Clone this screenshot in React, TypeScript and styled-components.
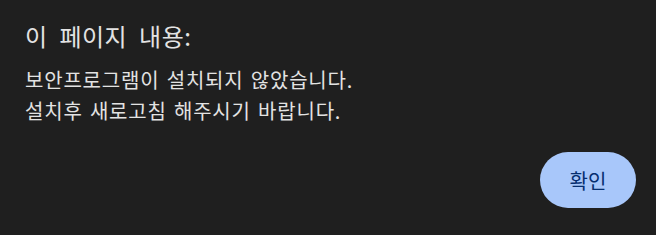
import styled, { createGlobalStyle } from 'styled-components'

const GlobalStyle = createGlobalStyle`
  html, body {
    margin: 0;
    padding: 0;
    background: #1f1f1f;
  }
`

const Dialog = styled.div`
  width: 656px;
  height: 235px;
  box-sizing: border-box;
  background: #1f1f1f;
  color: #e3e3e3;
  font-family: 'Noto Sans CJK KR', 'Noto Sans', sans-serif;
  padding: 20px 20px 27px 25px;
  display: flex;
  flex-direction: column;
`

const Title = styled.div`
  font-size: 24px;
  line-height: 32px;
  letter-spacing: 0.5px;
  word-spacing: 6px;
`

const Message = styled.div`
  margin-top: 12px;
  font-size: 20px;
  line-height: 31px;
  letter-spacing: 0.8px;
  word-spacing: 2px;
  flex: 1;
`

const Actions = styled.div`
  display: flex;
  justify-content: flex-end;
`

const Button = styled.button`
  width: 96px;
  height: 56px;
  border: none;
  border-radius: 28px;
  background: #a8c7fa;
  color: #062e6f;
  font-family: inherit;
  font-size: 20px;
  cursor: pointer;
`

export default function App() {
  return (
    <>
      <GlobalStyle />
      <Dialog>
        <Title>이 페이지 내용:</Title>
        <Message>
          보안프로그램이 설치되지 않았습니다.
          <br />
          설치후 새로고침 해주시기 바랍니다.
        </Message>
        <Actions>
          <Button>확인</Button>
        </Actions>
      </Dialog>
    </>
  )
}
